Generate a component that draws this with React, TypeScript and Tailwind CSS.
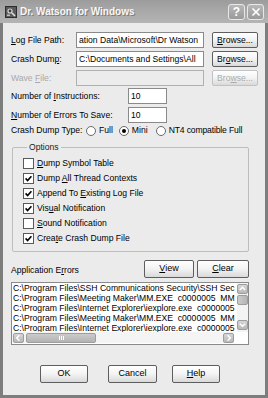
import React from 'react';

const U = ({ children }: { children: React.ReactNode }) => (
  <span className="underline decoration-[0.6px] underline-offset-[1px]">{children}</span>
);

const Button = ({
  children,
  disabled = false,
  className = '',
}: {
  children: React.ReactNode;
  disabled?: boolean;
  className?: string;
}) => (
  <div
    className={`flex items-center justify-center rounded-[2px] border bg-linear-to-b from-white via-[#f3f3f3] to-[#d9d9d9] ${
      disabled ? 'border-[#c2c2c2] text-[#ababab]' : 'border-[#5e5e5e] text-black'
    } ${className}`}
  >
    {children}
  </div>
);

const Field = ({ children, disabled = false, className = '' }: { children?: React.ReactNode; disabled?: boolean; className?: string }) => (
  <div
    className={`h-[16px] overflow-hidden whitespace-nowrap border px-[2px] leading-[14px] ${
      disabled ? 'border-[#b0b0b0] bg-[#ececec]' : 'border-[#8a8a8a] bg-white'
    } ${className}`}
  >
    {children}
  </div>
);

const Check = ({ checked }: { checked: boolean }) => (
  <div className="flex h-[11px] w-[11px] items-center justify-center border border-[#5a5a5a] bg-white">
    {checked && (
      <svg width="7" height="7" viewBox="0 0 7 7">
        <path d="M0.6 3.4 L2.6 5.5 L6.4 1.2" stroke="#000" strokeWidth="1.6" fill="none" />
      </svg>
    )}
  </div>
);

const Radio = ({ on }: { on: boolean }) => (
  <div className="flex h-[10px] w-[10px] items-center justify-center rounded-full border border-[#6a6a6a] bg-white">
    {on && <div className="h-[4px] w-[4px] rounded-full bg-black" />}
  </div>
);

const Arrow = ({ dir }: { dir: 'up' | 'down' | 'left' | 'right' }) => {
  const d = {
    up: 'M2 6 L5 3 L8 6',
    down: 'M2 3.5 L5 6.5 L8 3.5',
    left: 'M6 2 L3 5 L6 8',
    right: 'M4 2 L7 5 L4 8',
  }[dir];
  return (
    <div className="flex h-[10px] w-[11px] items-center justify-center rounded-[2px] border border-[#9d9d9d] bg-linear-to-b from-[#d6d6d6] to-[#b8b8b8]">
      <svg width="10" height="10" viewBox="0 0 10 10">
        <path d={d} stroke="#fff" strokeWidth="1.6" fill="none" />
      </svg>
    </div>
  );
};

const errors = [
  'C:\\Program Files\\SSH Communications Security\\SSH Sec',
  'C:\\Program Files\\Meeting Maker\\MM.EXE  c0000005  MM',
  'C:\\Program Files\\Internet Explorer\\iexplore.exe  c0000005',
  'C:\\Program Files\\Meeting Maker\\MM.EXE  c0000005  MM',
  'C:\\Program Files\\Internet Explorer\\iexplore.exe  c0000005',
];

const options = [
  { label: <><U>D</U>ump Symbol Table</>, checked: false },
  { label: <>Dump <U>A</U>ll Thread Contexts</>, checked: true },
  { label: <>Append To <U>E</U>xisting Log File</>, checked: true },
  { label: <>Vis<U>u</U>al Notification</>, checked: true },
  { label: <><U>S</U>ound Notification</>, checked: false },
  { label: <>Crea<U>t</U>e Crash Dump File</>, checked: true },
];

export default function App() {
  return (
    <div className="flex h-[398px] w-[268px] flex-col bg-[#7d7d7d] font-['Liberation_Sans',Arial,sans-serif] text-[8.6px] text-black">
      {/* title bar */}
      <div className="flex h-[23px] shrink-0 items-center bg-linear-to-b from-[#9c9c9c] via-[#a9a9a9] to-[#b4b4b4] pl-[5px] pr-[4px]">
        <svg width="12" height="12" viewBox="0 0 12 12">
          <rect x="0" y="0" width="12" height="12" fill="#2e2e2e" />
          <rect x="1" y="1" width="10" height="10" fill="#5a5a5a" />
          <circle cx="5" cy="5" r="2.6" fill="#d8d8d8" />
          <circle cx="5" cy="5" r="1.4" fill="#3a3a3a" />
          <path d="M7 7 L10 10" stroke="#e0e0e0" strokeWidth="1.6" />
          <rect x="2" y="8.5" width="3" height="1.5" fill="#bdbdbd" />
        </svg>
        <span className="ml-[3px] flex-1 text-[10px] font-bold text-[#f7f7f7] [text-shadow:1px_1px_0_#7a7a7a]">
          Dr. Watson for Windows
        </span>
        <div className="flex h-[16px] w-[17px] items-center justify-center rounded-[3px] border border-[#e8e8e8] bg-linear-to-b from-[#b8b8b8] to-[#9a9a9a] text-[12px] font-bold leading-none text-white">
          ?
        </div>
        <div className="ml-[2px] flex h-[16px] w-[17px] items-center justify-center rounded-[3px] border border-[#e8e8e8] bg-linear-to-b from-[#b8b8b8] to-[#9a9a9a]">
          <svg width="10" height="10" viewBox="0 0 10 10">
            <path d="M1.5 1.5 L8.5 8.5 M8.5 1.5 L1.5 8.5" stroke="#fff" strokeWidth="1.7" />
          </svg>
        </div>
      </div>

      {/* body */}
      <div className="mx-[3px] mb-[3px] flex flex-1 flex-col bg-[#ebebeb] pl-[8px] pt-[9px]">
        <div className="flex flex-col gap-[3px]">
          <div className="flex h-[16px] items-center">
            <div className="w-[65px]"><U>L</U>og File Path:</div>
            <Field className="w-[128px]">ation Data\Microsoft\Dr Watson</Field>
            <Button className="ml-[8px] h-[16px] w-[46px]"><span><U>B</U>rowse...</span></Button>
          </div>
          <div className="flex h-[16px] items-center">
            <div className="w-[65px]">Crash Dum<U>p</U>:</div>
            <Field className="w-[128px]">C:\Documents and Settings\All</Field>
            <Button className="ml-[8px] h-[16px] w-[46px]"><span>Br<U>o</U>wse...</span></Button>
          </div>
          <div className="flex h-[16px] items-center">
            <div className="w-[65px] text-[#a9a9a9]">Wave <U>F</U>ile:</div>
            <Field disabled className="w-[128px]" />
            <Button disabled className="ml-[8px] h-[16px] w-[46px]"><span>Bro<U>w</U>se...</span></Button>
          </div>
        </div>

        <div className="mt-[2px] flex flex-col gap-[3px]">
          <div className="flex h-[16px] items-center">
            <div className="w-[117px]">Number of <U>I</U>nstructions:</div>
            <Field className="w-[39px]">10</Field>
          </div>
          <div className="flex h-[16px] items-center">
            <div className="w-[117px]"><U>N</U>umber of Errors To Save:</div>
            <Field className="w-[39px]">10</Field>
          </div>
        </div>

        <div className="mt-[2px] flex h-[11px] items-center">
          <div className="w-[75px]">Crash Dump Type:</div>
          <Radio on={false} />
          <span className="ml-[3px]">Full</span>
          <div className="ml-[6px]"><Radio on /></div>
          <span className="ml-[3px]">Mini</span>
          <div className="ml-[8px]"><Radio on={false} /></div>
          <span className="ml-[3px] tracking-[-0.15px]">NT4 compatible Full</span>
        </div>

        <fieldset className="mt-[6px] ml-[1px] w-[237px] rounded-[2px] border border-[#bdbdbd] pb-[5px] pl-[10px]">
          <legend className="ml-[4px] px-[2px] leading-[10px] text-[#222]">Options</legend>
          <div className="mt-[4px] flex flex-col">
            {options.map((o, i) => (
              <div key={i} className="flex h-[15px] items-center">
                <Check checked={o.checked} />
                <span className="ml-[3px]">{o.label}</span>
              </div>
            ))}
          </div>
        </fieldset>

        <div className="mt-[8px] flex h-[18px] w-[238px] items-end">
          <div className="flex-1 pb-[1px]">Application E<U>r</U>rors</div>
          <Button className="h-[18px] w-[50px] text-[9px]"><span><U>V</U>iew</span></Button>
          <Button className="ml-[3px] h-[18px] w-[52px] text-[9px]"><span><U>C</U>lear</span></Button>
        </div>

        <div className="mt-[4px] flex h-[63px] w-[238px] flex-col border border-[#8a8a8a] bg-white">
          <div className="flex h-[49px]">
            <div className="flex-1 overflow-hidden pl-[1px]">
              {errors.map((e, i) => (
                <div key={i} className="h-[10px] whitespace-pre leading-[10px]">{e}</div>
              ))}
            </div>
            <div className="flex w-[11px] flex-col bg-[#f4f4f4] pt-[1px]">
              <Arrow dir="up" />
              <div className="mt-[1px] h-[10px] w-[11px] rounded-[2px] border border-[#9d9d9d] bg-linear-to-r from-[#cbcbcb] to-[#b5b5b5]" />
              <div className="flex-1" />
              <Arrow dir="down" />
              <div className="h-[2px]" />
            </div>
          </div>
          <div className="flex h-[11px] items-center bg-[#f4f4f4] pl-[1px]">
            <Arrow dir="left" />
            <div className="ml-[2px] flex h-[10px] w-[70px] items-center justify-center gap-[1px] rounded-[2px] border border-[#9d9d9d] bg-linear-to-b from-[#cbcbcb] to-[#b3b3b3]">
              <div className="h-[4px] w-[1px] bg-white" />
              <div className="h-[4px] w-[1px] bg-white" />
              <div className="h-[4px] w-[1px] bg-white" />
            </div>
            <div className="flex-1" />
            <Arrow dir="right" />
            <div className="w-[14px] self-stretch bg-white" />
          </div>
        </div>

        <div className="mt-[20px] flex h-[18px] text-[9px]">
          <Button className="ml-[29px] h-[18px] w-[48px]">OK</Button>
          <Button className="ml-[20px] h-[18px] w-[49px]">Cancel</Button>
          <Button className="ml-[15px] h-[18px] w-[48px]"><span><U>H</U>elp</span></Button>
        </div>
      </div>
    </div>
  );
}
